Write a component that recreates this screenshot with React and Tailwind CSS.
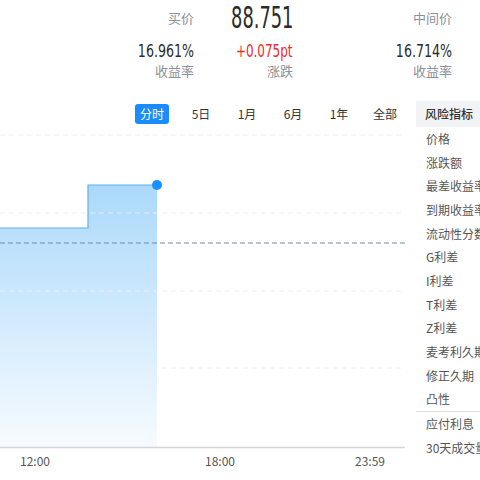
const CJK = { fontFamily: '"Noto Sans CJK SC", "Noto Sans", sans-serif' };
const NUM = { fontFamily: '"DejaVu Sans Condensed", "Liberation Sans", sans-serif' };

const risks = [
  "价格",
  "涨跌额",
  "最差收益率",
  "到期收益率",
  "流动性分数",
  "G利差",
  "I利差",
  "T利差",
  "Z利差",
  "麦考利久期",
  "修正久期",
  "凸性",
];

const tabs = ["5日", "1月", "6月", "1年", "全部"];

function Cell({ w, children, className = "" }) {
  return <div className={`flex shrink-0 justify-end ${w} ${className}`}>{children}</div>;
}

function Quote() {
  return (
    <div>
      <div className="flex h-[36px] items-center">
        <Cell w="w-[194px]" className="text-[13px] text-[#8b9099]">
          <span style={CJK}>买价</span>
        </Cell>
        <Cell w="w-[99px]">
          <span
            style={NUM}
            className="inline-block origin-right scale-x-[0.66] text-[30px] leading-[36px] text-[#2b2b2b]"
          >
            88.751
          </span>
        </Cell>
        <Cell w="w-[159px]" className="text-[13px] text-[#8b9099]">
          <span style={CJK}>中间价</span>
        </Cell>
      </div>
      <div className="flex h-[26px] items-center pt-[2px] text-[18px]">
        <Cell w="w-[194px]" className="text-[#2b2b2b]">
          <span style={NUM} className="inline-block origin-right scale-x-[0.78]">
            16.961%
          </span>
        </Cell>
        <Cell w="w-[99px]" className="text-[#ee2a2a]">
          <span style={NUM} className="inline-block origin-right scale-x-[0.74]">
            +0.075pt
          </span>
        </Cell>
        <Cell w="w-[159px]" className="text-[#2b2b2b]">
          <span style={NUM} className="inline-block origin-right scale-x-[0.78]">
            16.714%
          </span>
        </Cell>
      </div>
      <div className="flex h-[18px] items-center text-[13px] text-[#8b9099]" style={CJK}>
        <Cell w="w-[194px]">收益率</Cell>
        <Cell w="w-[99px]">涨跌</Cell>
        <Cell w="w-[159px]">收益率</Cell>
      </div>
    </div>
  );
}

function Chart() {
  const grid = [8, 86, 164, 241];
  return (
    <svg width="416" height="323" className="block">
      <defs>
        <linearGradient id="fill" x1="0" y1="0" x2="0" y2="1">
          <stop offset="0" stopColor="#abd9fb" />
          <stop offset="1" stopColor="#f7fbff" />
        </linearGradient>
      </defs>
      <path d="M0 101 H88 V58 H157 V320 H0 Z" fill="url(#fill)" />
      {grid.map((y) => (
        <line key={y} x1="0" x2="405" y1={y} y2={y} stroke="#eceef0" strokeDasharray="5 4" />
      ))}
      <line x1="0" x2="405" y1="116" y2="116" stroke="#6f8fa6" strokeDasharray="5 3" />
      <path d="M0 101 H88 V58 H157" fill="none" stroke="#5fb0ec" strokeWidth="1.2" />
      <circle cx="157" cy="58" r="5" fill="#1890ff" />
      <line x1="0" x2="405" y1="320.5" y2="320.5" stroke="#d2d4d8" strokeWidth="1.5" />
    </svg>
  );
}

function RiskPanel() {
  return (
    <div className="w-[64px] shrink-0 overflow-hidden pt-[1px] text-[12px] text-[#555]" style={CJK}>
      <div className="flex h-[26px] items-center whitespace-nowrap bg-[#f2f3f5] pl-[9px] font-medium text-[#333]">
        风险指标
      </div>
      {risks.map((r) => (
        <div key={r} className="flex h-[23.7px] items-center whitespace-nowrap pl-[10px]">
          {r}
        </div>
      ))}
      <div className="h-px bg-[#dfe1e5]" />
      <div className="flex h-[24px] items-center whitespace-nowrap pl-[10px]">应付利息</div>
      <div className="flex h-[24px] items-center whitespace-nowrap pl-[10px]">30天成交量</div>
    </div>
  );
}

export default function App() {
  return (
    <div className="h-[480px] w-[480px] overflow-hidden bg-white">
      <Quote />
      <div className="mt-[20px] flex">
        <div className="w-[416px] shrink-0">
          <div className="flex h-[27px] items-center pl-[135px] pt-[1px] text-[12px] text-[#333]" style={CJK}>
            <div className="flex h-[20px] w-[34px] items-center justify-center rounded-[3px] bg-[#1a8cff] text-white">
              分时
            </div>
            <div className="ml-[9px] flex">
              {tabs.map((t) => (
                <div key={t} className="w-[46px] text-center">
                  {t}
                </div>
              ))}
            </div>
          </div>
          <Chart />
          <div className="flex h-[22px] items-center text-[12px] text-[#555]" style={CJK}>
            <div className="ml-[5px] w-[60px] text-center">12:00</div>
            <div className="ml-[125px] w-[60px] text-center">18:00</div>
            <div className="ml-[90px] w-[60px] text-center">23:59</div>
          </div>
        </div>
        <RiskPanel />
      </div>
    </div>
  );
}
